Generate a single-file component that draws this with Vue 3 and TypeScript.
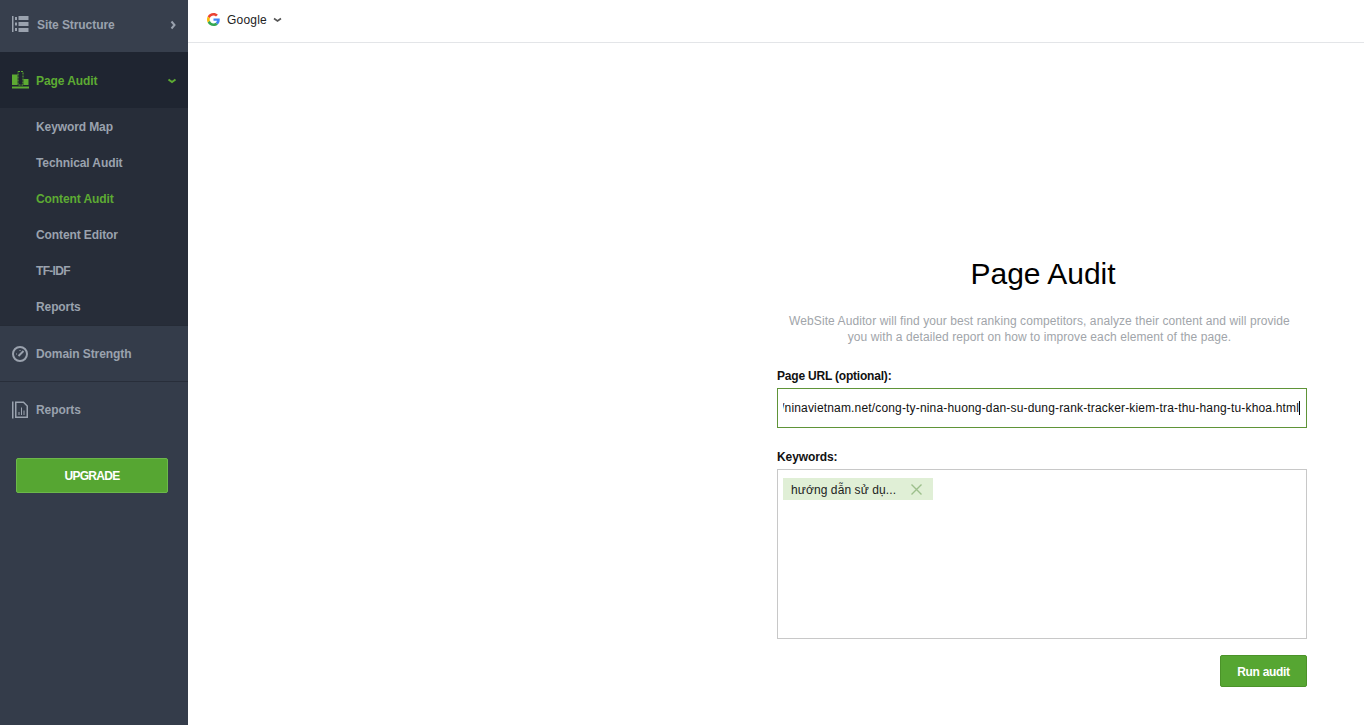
<script setup lang="ts">
const subItems = [
  { label: 'Keyword Map', active: false, tight: false },
  { label: 'Technical Audit', active: false, tight: false },
  { label: 'Content Audit', active: true, tight: false },
  { label: 'Content Editor', active: false, tight: false },
  { label: 'TF-IDF', active: false, tight: true },
  { label: 'Reports', active: false, tight: false },
]
const url = '/ninavietnam.net/cong-ty-nina-huong-dan-su-dung-rank-tracker-kiem-tra-thu-hang-tu-khoa.html'
</script>

<template>
  <div class="app">
    <aside class="sidebar">
      <div class="nav-row first">
        <svg class="nav-icon" width="18" height="18" viewBox="0 0 18 18" fill="#9aa2ae">
          <rect x="0" y="1" width="1.5" height="16" />
          <rect x="3" y="2" width="2" height="3" /><rect x="3" y="7.5" width="2" height="3" /><rect x="3" y="13" width="2" height="3" />
          <rect x="6.5" y="1" width="10" height="4" /><rect x="6.5" y="7" width="10" height="4" /><rect x="6.5" y="13" width="10" height="4" />
        </svg>
        <span class="nav-label shifted">Site Structure</span>
        <svg class="chev up" width="8" height="10" viewBox="0 0 8 10" fill="none" stroke="#9aa2ae" stroke-width="2"><path d="M2.5 1.5 5.5 5 2.5 8.5" /></svg>
      </div>
      <div class="nav-row open">
        <svg class="nav-icon" width="18" height="18" viewBox="0 0 18 18" fill="#5dab33">
          <rect x="0" y="3.500" width="5.500" height="10.500" />
          <rect x="6" y="0.500" width="5" height="13.500" fill="none" stroke="#5dab33" stroke-width="1" stroke-dasharray="2 1" />
          <rect x="11.500" y="8" width="5" height="6" />
          <rect x="0" y="15.500" width="17" height="2" />
        </svg>
        <span class="nav-label green">Page Audit</span>
        <svg class="chev down" width="10" height="8" viewBox="0 0 10 8" fill="none" stroke="#5dab33" stroke-width="2"><path d="M1.5 2.5 5 5 8.500 2.500" /></svg>
      </div>
      <ul class="sub">
        <li v-for="item in subItems" :key="item.label" :class="{ active: item.active, tight: item.tight }">{{ item.label }}</li>
      </ul>
      <div class="nav-row bordered">
        <svg class="nav-icon" width="18" height="18" viewBox="0 0 18 18" fill="none" stroke="#9aa2ae" stroke-width="2">
          <circle cx="8" cy="9" r="7" />
          <path d="M6.500 11 11.500 6" stroke-width="2" />
          <path d="M4 9H5M8 5V6" stroke-width="1" />
        </svg>
        <span class="nav-label">Domain Strength</span>
      </div>
      <div class="nav-row">
        <svg class="nav-icon" width="18" height="18" viewBox="0 0 18 18" fill="none" stroke="#9aa2ae">
          <path d="M0.750 0.500V17.500" stroke-width="1.500" />
          <path d="M3.750 1.250H11.500L15.250 5V16.250H3.750Z" stroke-width="1.500" />
          <path d="M7 14V11M9.500 14V6.500M12 14V9.500" stroke-width="1" />
        </svg>
        <span class="nav-label">Reports</span>
      </div>
      <button class="upgrade" type="button">UPGRADE</button>
    </aside>

    <main class="main">
      <header class="topbar">
        <svg width="13" height="13" viewBox="0 0 48 48">
          <path fill="#EA4335" d="M24 9.500c3.500 0 6.700 1.200 9.200 3.600l6.900-6.900C35.900 2.400 30.500 0 24 0 14.600 0 6.500 5.400 2.600 13.200l8 6.200C12.500 13.600 17.800 9.500 24 9.500z" />
          <path fill="#4285F4" d="M47 24.500c0-1.600-.1-3.100-.4-4.500H24v9h12.900c-.6 3-2.200 5.500-4.700 7.200l7.700 6c4.500-4.200 7.100-10.300 7.100-17.700z" />
          <path fill="#FBBC05" d="M10.600 28.600c-.5-1.400-.8-3-.8-4.600s.3-3.200.8-4.600l-8-6.200C.9 16.500 0 20.100 0 24s.9 7.500 2.600 10.800l8-6.200z" />
          <path fill="#34A853" d="M24 48c6.500 0 11.900-2.100 15.900-5.800l-7.700-6c-2.200 1.500-4.900 2.300-8.200 2.300-6.200 0-11.500-4.200-13.400-9.800l-8 6.200C6.500 42.600 14.600 48 24 48z" />
        </svg>
        <span class="engine">Google</span>
        <svg width="9" height="6" viewBox="0 0 9 6" fill="none" stroke="#555" stroke-width="1.600"><path d="M1 1.500 4.500 4 8 1.500" /></svg>
      </header>

      <section class="content">
        <div class="panel">
          <h1>Page Audit</h1>
          <p class="desc">WebSite Auditor will find your best ranking competitors, analyze their content and will provide<br />you with a detailed report on how to improve each element of the page.</p>
          <label class="field-label">Page URL (optional):</label>
          <div class="url-input">
            <div class="url-clip"><span class="url-text">{{ url }}</span></div>
            <span class="caret"></span>
          </div>
          <label class="field-label kw">Keywords:</label>
          <div class="kw-box">
            <span class="tag">
              <span class="tag-text">hướng dẫn sử dụ...</span>
              <svg width="11" height="11" viewBox="0 0 11 11" stroke="#9dbf8c" stroke-width="1.400" fill="none"><path d="M0.500 0.500 10.500 10.500M10.500 0.500 0.500 10.500" /></svg>
            </span>
          </div>
          <div class="actions"><button class="run" type="button">Run audit</button></div>
        </div>
      </section>
    </main>
  </div>
</template>

<style>
html, body { margin: 0; height: 100%; overflow: hidden; background: #fff; }
</style>

<style scoped>
.app {
  display: flex;
  height: 725px;
  font-family: "Liberation Sans", Arial, sans-serif;
  overflow: hidden;
}
.sidebar {
  width: 188px;
  flex: none;
  background: #343c4a;
  display: flex;
  flex-direction: column;
}
.nav-row {
  height: 56px;
  flex: none;
  box-sizing: border-box;
  display: flex;
  align-items: center;
  padding-left: 12px;
  position: relative;
}
.nav-row.first { height: 52px; padding-bottom: 4px; background: #373f4d; }
.nav-row.open { background: #1f2531; }
.nav-row.bordered { border-bottom: 1px solid #282e3a; }
.nav-icon { flex: none; margin-right: 6px; }
.nav-label {
  font-size: 12px;
  font-weight: 700;
  letter-spacing: -0.08px;
  color: #9aa2ae;
}
.nav-label.shifted { margin-left: 1px; margin-top: 2px; }
.nav-label.green { color: #5dab33; margin-top: 2px; }
.chev { position: absolute; right: 11px; top: 50%; margin-top: -4px; }
.chev.up { margin-top: -6px; }
.chev.down { margin-top: -3px; }
.sub {
  list-style: none;
  margin: 0;
  padding: 1px 0 0;
  height: 218px;
  box-sizing: border-box;
  background: #272d39;
  border-bottom: 1px solid #252b36;
}
.sub li {
  height: 36px;
  line-height: 36px;
  padding-left: 36px;
  font-size: 12px;
  font-weight: 700;
  letter-spacing: -0.1px;
  color: #9aa2ae;
}
.sub li.active { color: #5dab33; }
.sub li.tight { letter-spacing: -0.7px; }
.upgrade {
  margin: 20px 0 0 16px;
  width: 152px;
  height: 35px;
  background: #56a632;
  border: 1px solid #6cb84a;
  border-radius: 2px;
  color: #fff;
  font-family: inherit;
  font-size: 12px;
  font-weight: 700;
  letter-spacing: -0.7px;
  padding: 0;
}
.main {
  flex: 1;
  min-width: 0;
  display: flex;
  flex-direction: column;
  background: #fff;
}
.topbar {
  height: 43px;
  flex: none;
  box-sizing: border-box;
  border-bottom: 1px solid #e3e5e8;
  display: flex;
  align-items: flex-start;
  padding: 13px 0 0 19px;
  color: #222;
}
.topbar svg:last-child { margin: 4px 0 0 6px; }
.engine { font-size: 12px; line-height: 14px; margin-left: 7px; letter-spacing: 0.2px; }
.content {
  flex: 1;
  display: flex;
  justify-content: flex-end;
  padding-right: 57px;
}
.panel {
  width: 530px;
  padding-top: 212px;
}
h1 {
  margin: 0;
  font-size: 30px;
  font-weight: 400;
  line-height: 38px;
  color: #000;
  text-align: center;
  padding-left: 2px;
}
.desc {
  margin: 20px 0 0;
  padding-right: 5px;
  font-size: 12px;
  line-height: 16px;
  letter-spacing: 0.085px;
  color: #a1a5aa;
  text-align: center;
}
.field-label {
  display: block;
  margin-top: 23px;
  font-size: 12px;
  font-weight: 700;
  line-height: 16px;
  letter-spacing: -0.2px;
  color: #111;
}
.field-label.kw { margin-top: 21px; letter-spacing: -0.1px; }
.url-input {
  margin-top: 4px;
  height: 40px;
  box-sizing: border-box;
  border: 1px solid #5f9438;
  padding: 0 6px 0 5px;
  display: flex;
  align-items: center;
  font-size: 12px;
  color: #111;
  white-space: nowrap;
}
.url-clip {
  flex: 1;
  min-width: 0;
  display: flex;
  justify-content: flex-end;
  overflow: hidden;
}
.url-text { flex: none; letter-spacing: 0.165px; }
.caret {
  display: inline-block;
  width: 1px;
  height: 14px;
  background: #000;
  flex: none;
}
.kw-box {
  margin-top: 4px;
  height: 170px;
  box-sizing: border-box;
  border: 1px solid #c8c8c8;
  padding: 8px 5px;
}
.tag {
  display: inline-flex;
  align-items: center;
  box-sizing: border-box;
  width: 150px;
  height: 22px;
  background: #e0efd6;
  padding: 1px 0 0 8px;
  font-size: 12px;
  letter-spacing: 0.1px;
  color: #222;
  position: relative;
}
.tag svg { position: absolute; left: 128px; top: 6px; }
.actions {
  display: flex;
  justify-content: flex-end;
  margin-top: 16px;
}
.run {
  width: 87px;
  height: 32px;
  background: #56a632;
  border: 1px solid #4b9329;
  border-radius: 2px;
  color: #fff;
  font-family: inherit;
  font-size: 12px;
  font-weight: 700;
  letter-spacing: -0.3px;
  padding: 2px 0 0;
}
</style>
